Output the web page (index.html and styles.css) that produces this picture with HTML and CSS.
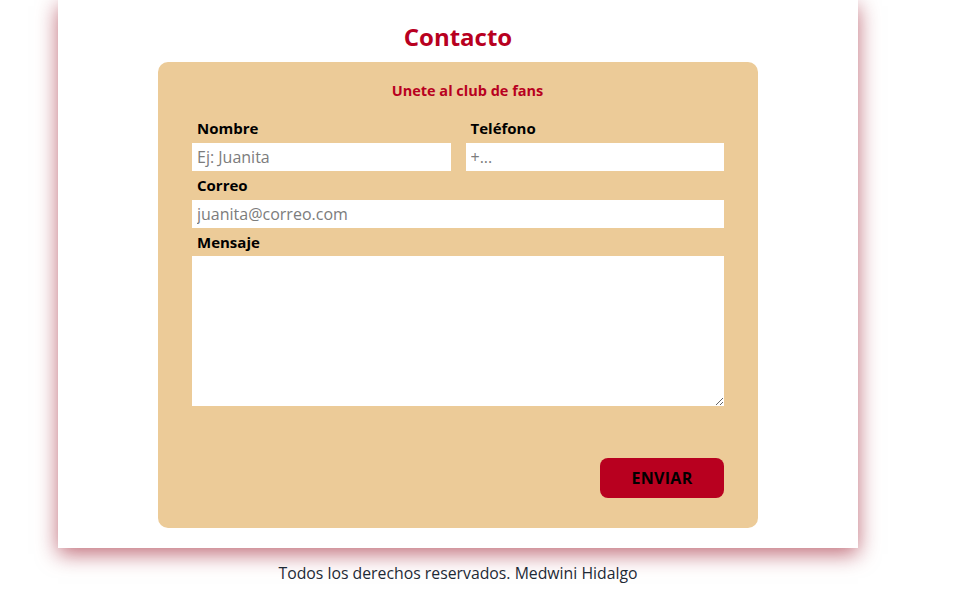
FILE: index.html
```html
<!DOCTYPE html>
<html lang="es">
<head>
<meta charset="utf-8">
<title>Contacto</title>
<link rel="stylesheet" href="styles.css">
</head>
<body>
<div class="wrap">
<main class="page">
  <section class="contact">
    <h2 class="title">Contacto</h2>
    <form class="card">
      <h3 class="subtitle">Unete al club de fans</h3>
      <div class="row">
        <div class="field">
          <label class="label" for="nombre">Nombre</label>
          <input class="input" id="nombre" type="text" placeholder="Ej: Juanita">
        </div>
        <div class="field">
          <label class="label" for="tel">Teléfono</label>
          <input class="input" id="tel" type="tel" placeholder="+...">
        </div>
      </div>
      <div class="field">
        <label class="label" for="correo">Correo</label>
        <input class="input" id="correo" type="email" placeholder="juanita@correo.com">
      </div>
      <div class="field">
        <label class="label label-tight" for="mensaje">Mensaje</label>
        <textarea class="textarea" id="mensaje"></textarea>
      </div>
      <div class="actions">
        <button class="btn" type="button">ENVIAR</button>
      </div>
    </form>
  </section>
</main>
<footer class="footer">Todos los derechos reservados. Medwini Hidalgo</footer>
</div>
</body>
</html>
```
FILE: styles.css
```css
html, body {
  margin: 0;
  padding: 0;
  background: #ffffff;
}
body {
  font-family: "Open Sans", "Noto Sans", sans-serif;
  color: #222;
}
.wrap {
  width: 916px;
}
.page {
  width: 800px;
  margin: 0 auto;
  background: #fff;
  box-shadow: 0 6px 20px rgba(150, 10, 30, 0.6);
  padding: 19px 0 20px;
}
.contact {
  display: flex;
  flex-direction: column;
  align-items: center;
}
.title {
  margin: 0 0 7px;
  font-size: 24px;
  line-height: 36px;
  font-weight: 700;
  color: #b8001f;
}
.card {
  width: 600px;
  box-sizing: border-box;
  background: #eccb98;
  border-radius: 10px;
  padding: 16px 34px 30px;
  display: flex;
  flex-direction: column;
}
.subtitle {
  margin: 0 0 10px;
  padding-left: 19px;
  text-align: center;
  font-size: 14.5px;
  line-height: 26px;
  font-weight: 700;
  color: #b8001f;
}
.row {
  display: flex;
  gap: 15px;
}
.row .field {
  flex: 1;
}
.field {
  display: flex;
  flex-direction: column;
}
.label {
  padding-left: 5px;
  font-size: 15px;
  line-height: 28px;
  height: 28px;
  margin-bottom: 1px;
  font-weight: 700;
  color: #000;
}
.label-tight {
  margin-bottom: 0;
}
.input, .textarea {
  border: none;
  outline: none;
  background: #fff;
  font-family: "Open Sans", sans-serif;
  font-size: 16px;
  font-weight: 400;
  padding: 0 5px;
  margin: 0;
  box-sizing: border-box;
  color: #333;
}
.input {
  height: 28px;
}
.textarea {
  height: 150px;
  resize: vertical;
}
.input::placeholder {
  color: #7c7c7c;
}
.actions {
  display: flex;
  justify-content: flex-end;
  margin-top: 52px;
}
.btn {
  width: 124px;
  height: 40px;
  border: none;
  border-radius: 8px;
  background: #b8001f;
  color: #000;
  font-family: "Open Sans", sans-serif;
  font-weight: 700;
  font-size: 16px;
  letter-spacing: 0.3px;
}
.footer {
  text-align: center;
  font-size: 15.8px;
  line-height: 22px;
  color: #1e2a36;
  padding: 14px 0 10px;
}
```
